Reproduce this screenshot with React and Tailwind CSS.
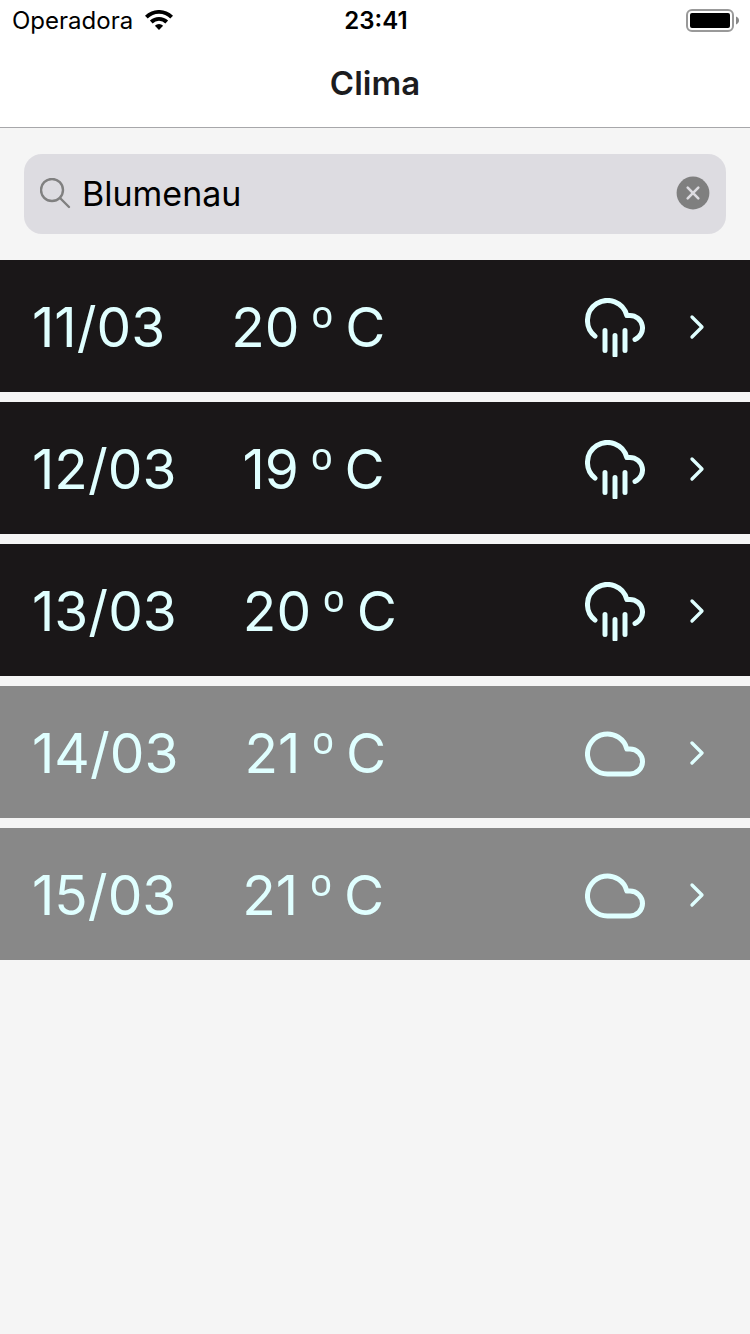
const forecast = [
  { date: "11/03", temp: 20, sky: "rain" },
  { date: "12/03", temp: 19, sky: "rain" },
  { date: "13/03", temp: 20, sky: "rain" },
  { date: "14/03", temp: 21, sky: "cloud" },
  { date: "15/03", temp: 21, sky: "cloud" },
];

const stroke = {
  fill: "none",
  stroke: "currentColor",
  strokeWidth: 2,
  strokeLinecap: "round",
  strokeLinejoin: "round",
  "aria-hidden": true,
};

function RainIcon() {
  return (
    <svg viewBox="0 0 60 59" className="h-[59px] w-[60px]" {...stroke} strokeWidth={5}>
      <path d="M40 32.5v20M20 32.5v20M30 37.5v20" />
      <path d="M50 41.45A12.5 12.5 0 0 0 45 17.5h-3.15A20 20 0 1 0 10 38.13" />
    </svg>
  );
}

function CloudIcon() {
  return (
    <svg viewBox="0 0 24 24" className="size-[60px]" {...stroke}>
      <path d="M18 10h-1.26A8 8 0 1 0 9 20h9a5 5 0 0 0 0-10z" />
    </svg>
  );
}

function StatusBar() {
  return (
    <div className="grid h-10 grid-cols-3 items-center pl-3 pr-[10px] text-black">
      <div className="flex items-center gap-3">
        <span className="pt-0.5 text-[24px] leading-7">Operadora</span>
        <svg viewBox="0 0 28 20" className="h-5 w-7" aria-hidden="true">
          <path d="M0 5.700A20 20 0 0 1 28 5.700L25.300 8.500A16 16 0 0 0 2.700 8.500z" />
          <path d="M4.900 10.600A13 13 0 0 1 23.100 10.600L20.400 13.400A9.200 9.200 0 0 0 7.600 13.400z" />
          <path d="M14 20l-4.100-4.300a5.700 5.700 0 0 1 8.200 0z" />
        </svg>
      </div>
      <span className="pt-0.5 text-center text-[24px] font-semibold leading-7">23:41</span>
      <svg viewBox="0 0 54 24" className="mt-px h-6 w-[54px] justify-self-end" aria-hidden="true">
        <rect x="1" y="1" width="46" height="21" rx="5" fill="none" stroke="#999" strokeWidth="2" />
        <rect x="4" y="4" width="40" height="15" rx="2" fill="#000" />
        <path d="M50 7.5c2 .8 3 2.2 3 4s-1 3.200-3 4z" fill="#888" />
      </svg>
    </div>
  );
}

function SearchBar() {
  return (
    <form role="search" className="px-6 py-[26px]" onSubmit={(e) => e.preventDefault()}>
      <div className="flex h-20 items-center gap-[10px] rounded-[18px] bg-[#dddce1] px-4">
        <svg viewBox="0 0 32 32" className="size-8 shrink-0" fill="none" stroke="#808080" strokeWidth="2.4" strokeLinecap="round" aria-hidden="true">
          <circle cx="12" cy="12" r="11" />
          <path d="M20 20l9 9" />
        </svg>
        <input
          type="text"
          aria-label="Cidade"
          defaultValue="Blumenau"
          className="min-w-0 flex-1 bg-transparent text-[34px] leading-10 text-black outline-none"
        />
        <button type="button" aria-label="Limpar" className="shrink-0">
          <svg viewBox="0 0 34 34" className="-mt-0.5 size-[34px]" aria-hidden="true">
            <circle cx="17" cy="17" r="16.400" fill="#7f7f7f" />
            <path d="M11.700 11.700l10.600 10.600M22.300 11.700L11.700 22.300" stroke="#dddce1" strokeWidth="2.600" strokeLinecap="round" />
          </svg>
        </button>
      </div>
    </form>
  );
}

function ForecastRow({ date, temp, sky }) {
  const rain = sky === "rain";
  return (
    <li>
      <a
        href="#"
        className={`flex h-[132px] items-center pl-8 pr-[33px] text-[#e0ffff] ${rain ? "bg-[#1a1718]" : "bg-[#888888]"}`}
      >
        <span className="pt-0.5 text-[55px] leading-[64px] [font-kerning:none]">{date}</span>
        <span className="ml-[66px] flex flex-1 gap-[11px] pt-0.5 text-[55px] leading-[64px]">
          <span>{temp}</span>
          <span className="font-light">º</span>
          <span>C</span>
        </span>
        <span className="mt-[3px]">{rain ? <RainIcon /> : <CloudIcon />}</span>
        <svg viewBox="0 0 24 24" className="ml-8 mt-0.5 size-10" {...stroke}>
          <path d="M9 18l6-6-6-6" />
        </svg>
      </a>
    </li>
  );
}

export default function App() {
  return (
    <div className="min-h-screen bg-[#f5f5f5] font-['Inter',sans-serif]">
      <header className="border-b border-[#a7a7aa] bg-white">
        <StatusBar />
        <h1 className="h-[87px] text-center text-[33px] font-semibold leading-[87px] text-[#1c1c1e]">Clima</h1>
      </header>
      <main>
        <SearchBar />
        <ul className="flex flex-col gap-[10px]">
          {forecast.map((day) => (
            <ForecastRow key={day.date} {...day} />
          ))}
        </ul>
      </main>
    </div>
  );
}
